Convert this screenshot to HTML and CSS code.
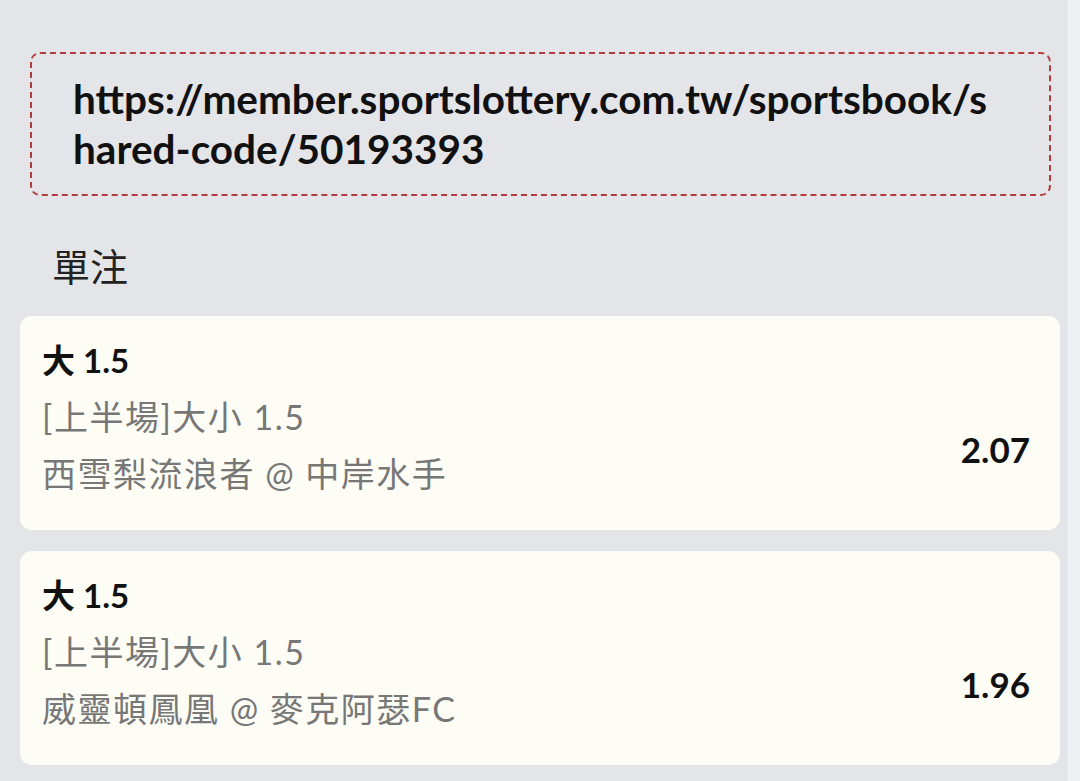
FILE: index.html
```html
<!DOCTYPE html>
<html lang="zh-Hant">
<head>
    <meta charset="UTF-8">
    <meta name="viewport" content="width=device-width, initial-scale=1.0">
    <title>分享注單</title>
    <link rel="stylesheet" href="styles.css">
</head>
<body>
    <div class="page">
        <main class="content">
            <div class="share-link">https://member.sportslottery.com.tw/sportsbook/shared-code/50193393</div>
            <h2 class="section-title">單注</h2>
            <div class="bet-list">
                <div class="bet-card">
                    <div class="bet-info">
                        <div class="bet-pick">大 1.5</div>
                        <div class="bet-market">[上半場]大小 1.5</div>
                        <div class="bet-match">西雪梨流浪者 @ 中岸水手</div>
                    </div>
                    <div class="bet-odds">2.07</div>
                </div>
                <div class="bet-card">
                    <div class="bet-info">
                        <div class="bet-pick">大 1.5</div>
                        <div class="bet-market">[上半場]大小 1.5</div>
                        <div class="bet-match">威靈頓鳳凰 @ 麥克阿瑟FC</div>
                    </div>
                    <div class="bet-odds">1.96</div>
                </div>
            </div>
        </main>
        <div class="scroll-track"></div>
    </div>
</body>
</html>
```
FILE: styles.css
```css
body, html {
    height: 100%;
    margin: 0;
    font-family: Lato, "Noto Sans CJK TC", sans-serif;
    overflow: hidden;
}
.page {
    display: flex;
    height: 100%;
    background-color: #e4e5e9;
}
.content {
    flex: 1;
    padding: 52px 7px 0 20px;
}
.scroll-track {
    width: 12px;
    background-color: #eeeff2;
    border-left: 1px solid #e9eaee;
}
.share-link {
    margin: 0 9px 0 10px;
    padding: 20px 44px 20px 41px;
    border: 2px dashed #b23b3b;
    border-radius: 10px;
    font-size: 40.5px;
    font-weight: bold;
    line-height: 50px;
    color: #111;
    word-break: break-all;
}
.section-title {
    margin: 46px 0 26px 32px;
    font-size: 38px;
    font-weight: normal;
    line-height: 48px;
    color: #222;
}
.bet-list {
    display: flex;
    flex-direction: column;
    gap: 21px;
}
.bet-card {
    display: flex;
    align-items: flex-start;
    justify-content: space-between;
    height: 214px;
    box-sizing: border-box;
    padding: 16px 30px 28px 22px;
    background-color: #fdfdf5;
    border-radius: 12px;
}
.bet-info {
    display: flex;
    flex-direction: column;
}
.bet-pick {
    font-size: 33px;
    font-weight: bold;
    line-height: 56px;
    color: #111;
}
.bet-market, .bet-match {
    font-size: 34px;
    letter-spacing: 1.5px;
    line-height: 57px;
    color: #777;
}
.bet-odds {
    margin-top: 97px;
    font-size: 35px;
    font-weight: bold;
    line-height: 40px;
    color: #111;
}
```
